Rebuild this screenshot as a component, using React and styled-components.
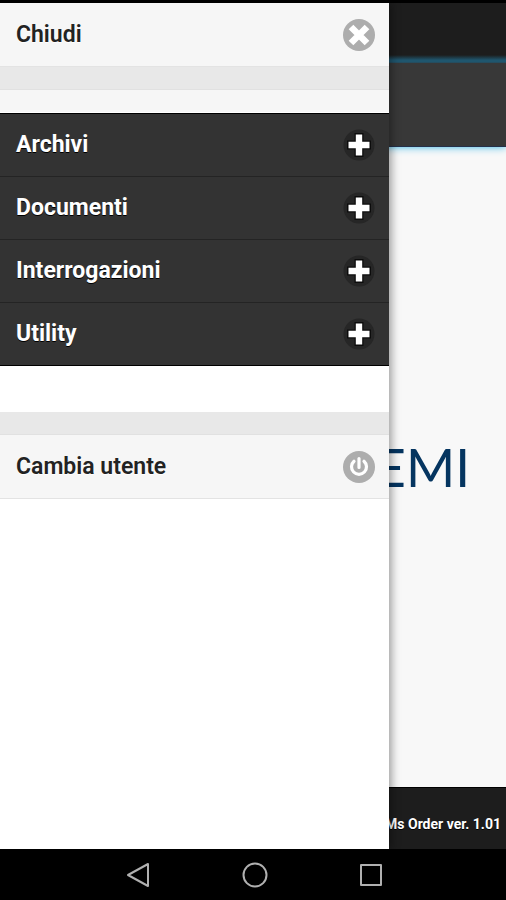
import styled, { createGlobalStyle } from "styled-components";

const GlobalStyle = createGlobalStyle`
  * {
    box-sizing: border-box;
  }

  body {
    margin: 0;
    background-color: #000;
    font-family: Roboto, sans-serif;
  }
`;

const Screen = styled.div`
  display: flex;
  flex-direction: column;
  min-height: 100vh;
  padding-top: 3px;
  background-color: #000;
`;

const Stage = styled.div`
  position: relative;
  display: flex;
  flex: 1;
  overflow: hidden;
`;

const Page = styled.div`
  display: flex;
  flex: 1;
  flex-direction: column;
  background-color: #f8f8f8;
`;

const TitleBar = styled.header`
  height: 60px;
  background: linear-gradient(#1d1d1d 52px, #1f566e 57px, #1f566e 59px, #2c4450);
`;

const Toolbar = styled.div`
  height: 84px;
  background-color: #383838;
  border-bottom: 1px solid #24304a;
  box-shadow: 0 0 8px #33b5e5;
  clip-path: inset(0 0 -10px 0);
`;

const Content = styled.main`
  display: flex;
  flex: 1;
  align-items: center;
  justify-content: flex-end;
  padding: 0 36px 0 0;
`;

const Brand = styled.span`
  color: #053560;
  font-family: Lato, sans-serif;
  font-size: 53px;
  line-height: 64px;
`;

const Footer = styled.footer`
  display: flex;
  align-items: center;
  justify-content: flex-end;
  height: 62px;
  padding: 10px 5px 0 0;
  border-top: 1px solid #000;
  background-color: #1d1d1d;
  color: #fff;
  font-size: 14px;
  font-weight: 700;
  line-height: 18px;
  text-shadow: 0 1px 0 #000;
`;

const Panel = styled.aside`
  position: absolute;
  top: 0;
  bottom: 0;
  left: 0;
  width: 76.9%;
  background-color: #fff;
  box-shadow: 3px 0 8px rgba(0, 0, 0, 0.35);
`;

const MenuButton = styled.button`
  display: flex;
  align-items: center;
  justify-content: space-between;
  width: 100%;
  height: ${props => (props.$dark ? 63 : 64)}px;
  padding: 0 14px 0 16px;
  border: 0;
  border-bottom: 1px solid ${props => (props.$dark ? "#242424" : "#e3e3e3")};
  background-color: ${props => (props.$dark ? "#333" : "#f6f6f6")};
  color: ${props => (props.$dark ? "#fff" : "#222")};
  font-family: inherit;
  font-size: 23px;
  font-weight: ${props => (props.$dark ? 700 : 600)};
  line-height: 28px;
  text-align: left;
  text-shadow: 0 1px 0 ${props => (props.$dark ? "#000" : "#fff")};
  cursor: pointer;
`;

const Divider = styled.div`
  height: 23px;
  border-bottom: 1px solid #e1e1e1;
  background-color: #e8e8e8;
`;

const Spacer = styled.div`
  height: 23px;
  border-bottom: 1px solid #fff;
  background-color: #f6f6f6;
`;

const Accordion = styled.nav`
  margin-bottom: 46px;
  border-top: 1px solid #000;

  ${MenuButton}:last-child {
    border-bottom-color: #000;
  }
`;

const Icon = styled.svg`
  flex: none;
  width: 32px;
  height: 32px;
`;

const NavBar = styled.nav`
  display: flex;
  align-items: center;
  justify-content: center;
  gap: 84px;
  height: 51px;
  padding-left: 3px;
`;

const NavButton = styled.button`
  display: flex;
  padding: 0;
  border: 0;
  background: none;
  cursor: pointer;

  svg {
    width: 32px;
    height: 32px;
    fill: none;
    stroke: #b0b0b0;
    stroke-width: 2;
    stroke-linejoin: round;
  }
`;

const sections = ["Archivi", "Documenti", "Interrogazioni", "Utility"];

const CloseIcon = () => (
  <Icon viewBox="0 0 32 32" aria-hidden="true">
    <circle cx="16" cy="16" r="16" fill="#adadad" />
    <path d="M8 8l16 16M24 8L8 24" stroke="#fff" strokeWidth="6.6" />
  </Icon>
);

const PlusIcon = () => (
  <Icon viewBox="0 0 32 32" aria-hidden="true">
    <circle cx="16" cy="16" r="15.5" fill="#262626" />
    <path d="M16 4v24M4 16h24" stroke="#0c0c0c" strokeWidth="9" />
    <path d="M16 5.5v21M5.5 16h21" stroke="#fff" strokeWidth="6.4" />
  </Icon>
);

const PowerIcon = () => (
  <Icon viewBox="0 0 32 32" aria-hidden="true">
    <circle cx="16" cy="16" r="16" fill="#adadad" />
    <path
      d="M11 10.2a7.5 7.5 0 1 0 10 0M16 7.5v9"
      fill="none"
      stroke="#fff"
      strokeWidth="3.2"
      strokeLinecap="round"
    />
  </Icon>
);

export default function App() {
  return (
    <Screen>
      <GlobalStyle />
      <Stage>
        <Page>
          <TitleBar />
          <Toolbar />
          <Content>
            <Brand>EMI</Brand>
          </Content>
          <Footer>Ms Order ver. 1.01</Footer>
        </Page>
        <Panel>
          <MenuButton type="button">
            Chiudi
            <CloseIcon />
          </MenuButton>
          <Divider />
          <Spacer />
          <Accordion>
            {sections.map(section => (
              <MenuButton key={section} type="button" $dark>
                {section}
                <PlusIcon />
              </MenuButton>
            ))}
          </Accordion>
          <Divider />
          <MenuButton type="button">
            Cambia utente
            <PowerIcon />
          </MenuButton>
        </Panel>
      </Stage>
      <NavBar>
        <NavButton type="button" aria-label="Indietro">
          <svg viewBox="0 0 32 32">
            <path d="M25 5v22L5 16z" />
          </svg>
        </NavButton>
        <NavButton type="button" aria-label="Home">
          <svg viewBox="0 0 32 32">
            <circle cx="16" cy="16" r="11.5" />
          </svg>
        </NavButton>
        <NavButton type="button" aria-label="Recenti">
          <svg viewBox="0 0 32 32">
            <rect x="6" y="6" width="20" height="20" />
          </svg>
        </NavButton>
      </NavBar>
    </Screen>
  );
}
